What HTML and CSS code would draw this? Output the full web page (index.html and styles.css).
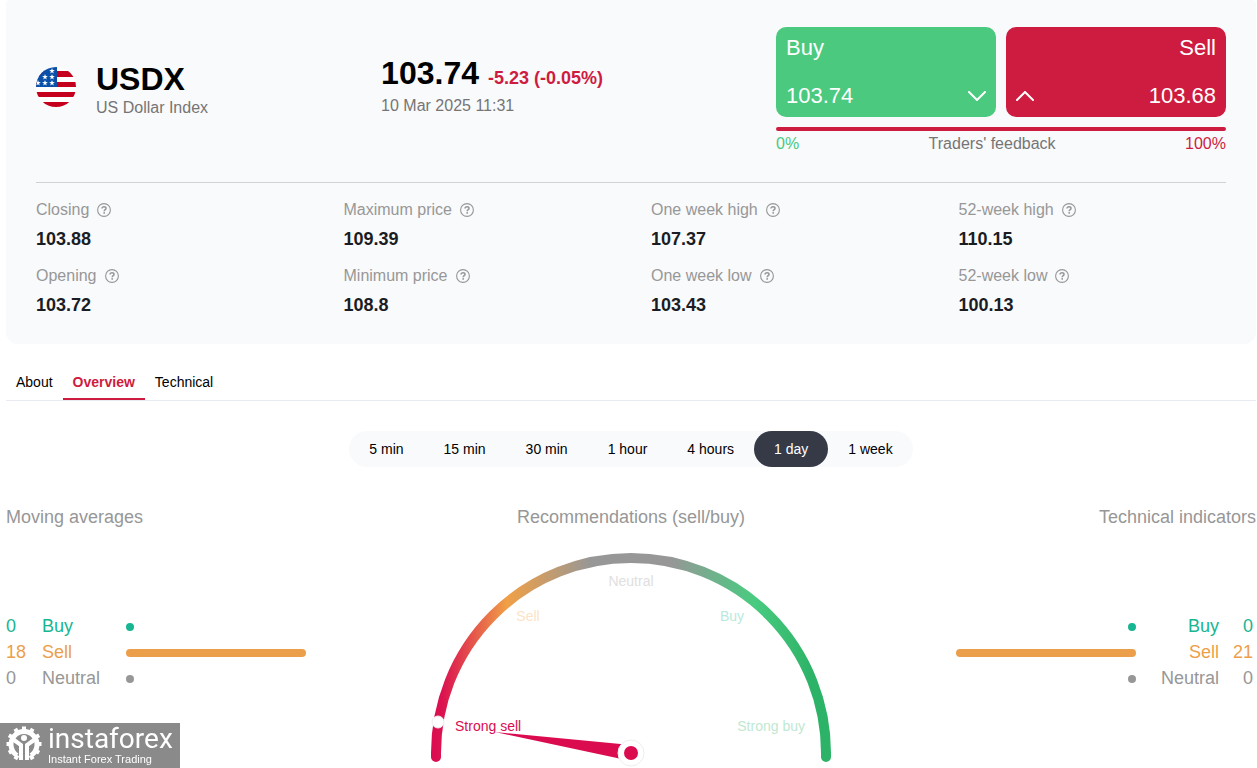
FILE: index.html
```html
<!DOCTYPE html>
<html lang="en">
<head>
<meta charset="utf-8">
<meta name="viewport" content="width=device-width, initial-scale=1">
<title>USDX – US Dollar Index</title>
<link rel="stylesheet" href="styles.css">
</head>
<body>
<svg class="defs" width="0" height="0" aria-hidden="true">
  <symbol id="help" viewBox="0 0 14 14">
    <circle cx="7" cy="7" r="6.4" fill="none" stroke="currentColor" stroke-width="1.1"/>
    <path d="M5 5.6C5 4.4 5.8 3.8 7 3.8S9 4.400 9 5.400C9 6.600 7.200 6.700 7.200 8.200" fill="none" stroke="currentColor" stroke-width="1.5"/>
    <rect x="6.4" y="9.1" width="1.6" height="1.6" fill="currentColor"/>
  </symbol>
  <symbol id="star" viewBox="-5 -5 10 10">
    <path d="M0-5 1.2-1.6 4.8-1.5 1.9.6 2.9 4 0 2-2.9 4-1.9.6-4.8-1.5-1.2-1.6z" fill="#fff"/>
  </symbol>
</svg>
<main class="page">
  <section class="quote">
    <header class="head">
      <div class="ident">
        <svg class="flag" viewBox="0 0 40 40" role="img" aria-label="United States">
          <clipPath id="round"><circle cx="20" cy="20" r="20"/></clipPath>
          <g clip-path="url(#round)">
            <rect width="40" height="40" fill="#fff"/>
            <path d="M0 4h40v6H0zM0 15h40v5H0zM0 25h40v5H0zM0 35h40v5H0z" fill="#c4001d"/>
            <rect width="21" height="20" fill="#0b50a8"/>
            <use href="#star" x="13" y="1" width="6" height="6"/>
            <use href="#star" x="6" y="7" width="6" height="6"/>
            <use href="#star" x="13" y="7" width="6" height="6"/>
            <use href="#star" x="-1" y="13" width="6" height="6"/>
            <use href="#star" x="6" y="13" width="6" height="6"/>
            <use href="#star" x="13" y="13" width="6" height="6"/>
          </g>
        </svg>
        <div>
          <h1 class="big">USDX</h1>
          <p class="sub">US Dollar Index</p>
        </div>
      </div>
      <div class="price">
        <p class="price-line"><strong class="big">103.74</strong><span class="change">-5.23 (-0.05%)</span></p>
        <p class="sub">10 Mar 2025 11:31</p>
      </div>
      <div class="trade">
        <div class="deals">
          <button class="deal deal-buy" type="button">
            <span>Buy</span>
            <span class="deal-row">103.74
              <svg class="chevron" viewBox="0 0 18 10"><path d="M1 1l8 8 8-8"/></svg>
            </span>
          </button>
          <button class="deal deal-sell" type="button">
            <span>Sell</span>
            <span class="deal-row">
              <svg class="chevron" viewBox="0 0 18 10"><path d="M1 9l8-8 8 8"/></svg>
              103.68</span>
          </button>
        </div>
        <div class="feedback-bar"></div>
        <div class="feedback">
          <span class="green">0%</span><span>Traders' feedback</span><span class="red">100%</span>
        </div>
      </div>
    </header>
    <dl class="stats">
      <div><dt>Closing <svg class="help"><use href="#help"/></svg></dt><dd>103.88</dd></div>
      <div><dt>Maximum price <svg class="help"><use href="#help"/></svg></dt><dd>109.39</dd></div>
      <div><dt>One week high <svg class="help"><use href="#help"/></svg></dt><dd>107.37</dd></div>
      <div><dt>52-week high <svg class="help"><use href="#help"/></svg></dt><dd>110.15</dd></div>
      <div><dt>Opening <svg class="help"><use href="#help"/></svg></dt><dd>103.72</dd></div>
      <div><dt>Minimum price <svg class="help"><use href="#help"/></svg></dt><dd>108.8</dd></div>
      <div><dt>One week low <svg class="help"><use href="#help"/></svg></dt><dd>103.43</dd></div>
      <div><dt>52-week low <svg class="help"><use href="#help"/></svg></dt><dd>100.13</dd></div>
    </dl>
  </section>

  <nav class="tabs">
    <a class="tab" href="#about">About</a>
    <a class="tab tab-active" href="#overview" aria-current="page">Overview</a>
    <a class="tab" href="#technical">Technical</a>
  </nav>

  <div class="periods">
    <button class="period" type="button">5 min</button>
    <button class="period" type="button">15 min</button>
    <button class="period" type="button">30 min</button>
    <button class="period" type="button">1 hour</button>
    <button class="period" type="button">4 hours</button>
    <button class="period period-active" type="button" aria-pressed="true">1 day</button>
    <button class="period" type="button">1 week</button>
  </div>

  <section class="signals">
    <div class="signal">
      <h2 class="title">Moving averages</h2>
      <ul class="rows">
        <li class="row row-buy"><span class="count">0</span><span class="label">Buy</span><span class="bar"></span></li>
        <li class="row row-sell"><span class="count">18</span><span class="label">Sell</span><span class="bar bar-full"></span></li>
        <li class="row row-neutral"><span class="count">0</span><span class="label">Neutral</span><span class="bar"></span></li>
      </ul>
    </div>
    <div class="signal signal-center">
      <h2 class="title">Recommendations (sell/buy)</h2>
      <svg class="gauge" viewBox="0 0 400 214" role="img" aria-label="Strong sell">
        <defs>
          <linearGradient id="scale" gradientUnits="userSpaceOnUse" x1="0" y1="0" x2="400" y2="0">
            <stop offset="0" stop-color="#db0b50"/>
            <stop offset=".03" stop-color="#db1450"/>
            <stop offset=".19" stop-color="#f0a046"/>
            <stop offset=".4" stop-color="#979797"/>
            <stop offset=".6" stop-color="#979797"/>
            <stop offset=".81" stop-color="#48cb80"/>
            <stop offset=".95" stop-color="#2db367"/>
            <stop offset="1" stop-color="#2db367"/>
          </linearGradient>
        </defs>
        <path d="M5 204V200A195 195 0 0 1 395 200V204" fill="none" stroke="url(#scale)" stroke-width="10" stroke-linecap="round"/>
        <circle cx="7" cy="169" r="6" fill="#fff" stroke="#eee" stroke-width="1"/>
        <g class="gauge-labels">
          <text x="200" y="33" text-anchor="middle" fill="#e0e0e0">Neutral</text>
          <text x="97" y="68" text-anchor="middle" fill="#fbe3c8">Sell</text>
          <text x="301" y="68" text-anchor="middle" fill="#b9e9dd">Buy</text>
          <text x="24" y="178" fill="#db0b50">Strong sell</text>
          <text x="374" y="178" text-anchor="end" fill="#c0e8d1">Strong buy</text>
        </g>
        <path d="M64 179L200 192V208z" fill="#db0b50"/>
        <circle cx="200" cy="200" r="13" fill="#fff" stroke="#eee" stroke-width="1"/>
        <circle cx="200" cy="200" r="7" fill="#db0b50"/>
      </svg>
    </div>
    <div class="signal signal-right">
      <h2 class="title">Technical indicators</h2>
      <ul class="rows">
        <li class="row row-buy"><span class="count">0</span><span class="label">Buy</span><span class="bar"></span></li>
        <li class="row row-sell"><span class="count">21</span><span class="label">Sell</span><span class="bar bar-full"></span></li>
        <li class="row row-neutral"><span class="count">0</span><span class="label">Neutral</span><span class="bar"></span></li>
      </ul>
    </div>
  </section>
</main>

<div class="brand">
  <svg class="gear" viewBox="-18 -18 36 36" aria-hidden="true">
    <path d="M-7 11.500A13 13 0 1 1 7 11.500" fill="none" stroke="#fff" stroke-width="5"/>
    <g stroke="#fff" stroke-width="4">
      <path d="M0-13V-17.500M-13 0H-17.500M13 0H17.500"/>
      <path d="M0-13V-17.500M0 13V17.500M-13 0H-17.500M13 0H17.500" transform="rotate(30)"/>
      <path d="M0-13V-17.500M0 13V17.500M-13 0H-17.500M13 0H17.500" transform="rotate(60)"/>
    </g>
    <circle cy="-6" r="3" fill="#fff"/>
    <path d="M-10-4L-3 1V16M10-4L3 1V16" fill="none" stroke="#fff" stroke-width="4"/>
  </svg>
  <div>
    <p class="brand-name">instaforex</p>
    <p class="brand-tag">Instant Forex Trading</p>
  </div>
</div>
</body>
</html>
```
FILE: styles.css
```css
* { box-sizing: border-box; }

body, h1, h2, p, dl, dd, ul { margin: 0; padding: 0; }

body {
  background: #fff;
  color: #000;
  font: 16px/20px "Liberation Sans", Arial, sans-serif;
}

button { border: 0; font: inherit; cursor: pointer; }

.defs { display: none; }
.page { padding: 0 1px 0 6px; }

.quote {
  padding: 27px 30px 28px;
  border-radius: 4px 4px 12px 12px;
  background: #f9fafc;
}

.head {
  display: flex;
  padding-bottom: 25px;
  border-bottom: 1px solid #d0d1d3;
}
.ident { display: flex; gap: 20px; width: 29%; padding-top: 34px; }
.flag { width: 40px; height: 40px; margin-top: 6px; }
.big { font-size: 32px; line-height: 36px; font-weight: 700; }
.sub { color: #757575; line-height: 22px; }
.price { flex: 1; padding-top: 28px; }
.price-line { display: flex; align-items: baseline; gap: 9px; margin-bottom: 4px; }
.change { color: #ce1c40; font-size: 18px; font-weight: 700; }

.trade { width: 450px; }
.deals { display: flex; gap: 10px; }
.deal {
  display: flex;
  flex: 1;
  flex-direction: column;
  justify-content: space-between;
  height: 90px;
  padding: 8px 10px;
  border-radius: 10px;
  color: #fff;
  font-size: 22px;
  line-height: 26px;
  text-align: left;
}
.deal-buy { background: #4ac97f; }
.deal-sell { background: #ce1c40; text-align: right; }
.deal-row { display: flex; align-items: center; justify-content: space-between; }
.chevron { width: 18px; height: 10px; fill: none; stroke: #fff; stroke-width: 2; stroke-linecap: round; }
.feedback-bar { height: 4px; margin-top: 10px; border-radius: 2px; background: #ce1c40; }
.feedback { display: flex; justify-content: space-between; color: #757575; line-height: 26px; }
.green { color: #4ac97f; }
.red { color: #ce1c40; }

.stats {
  display: grid;
  grid-template-columns: repeat(4, 1fr);
  gap: 16px 40px;
  padding-top: 17px;
}
dt { display: flex; align-items: center; gap: 8px; margin-bottom: 8px; color: #979797; }
dd { color: #1b1d24; font-size: 18px; line-height: 22px; font-weight: 700; }
.help { width: 14px; height: 14px; }

.tabs {
  display: flex;
  margin-top: 20px;
  border-bottom: 1px solid #e9ebf2;
  font-size: 14px;
}
.tab {
  padding: 8px 10px 6px;
  border-bottom: 2px solid transparent;
  color: #000;
  text-decoration: none;
}
.tab-active { border-color: #ce1c40; color: #ce1c40; font-weight: 700; }

.periods {
  display: flex;
  width: fit-content;
  margin: 30px auto 40px;
  border-radius: 18px;
  background: #f9fafc;
  font-size: 14px;
}
.period { height: 36px; padding: 0 20px; border-radius: 18px; background: none; color: #000; }
.period-active { background: #363946; color: #fff; }

.signals { display: grid; grid-template-columns: 1fr 400px 1fr; }
.title { color: #979797; font-size: 18px; line-height: 20px; font-weight: 400; }
.signal-center { text-align: center; }
.signal-right { text-align: right; }
.gauge { display: block; width: 100%; margin-top: 26px; }
.gauge-labels { font-size: 14px; }

.rows { margin-top: 86px; list-style: none; }
.row { display: flex; align-items: center; font-size: 18px; line-height: 26px; }
.row-buy { color: #17b591; }
.row-sell { color: #ec9f4b; }
.row-neutral { color: #979797; }
.count { width: 36px; }
.label { width: 84px; }
.bar { width: 8px; height: 8px; margin-top: 2px; border-radius: 4px; background: currentColor; }
.bar-full { width: 180px; }
.signal-right .row { flex-direction: row-reverse; padding-right: 3px; }
.signal-right .count { width: 34px; }
.signal-right .label { width: 83px; }

.brand {
  position: fixed;
  bottom: 0;
  left: 0;
  display: flex;
  align-items: flex-start;
  gap: 6px;
  width: 180px;
  height: 45px;
  padding: 3px 0 0 6px;
  background: #8a8a8a;
  color: #fff;
}
.gear { width: 36px; height: 36px; }
.brand-name { font: 400 28px/26px Roboto, sans-serif; }
.brand-tag { margin-top: 1px; font-size: 11px; line-height: 12px; }
```
